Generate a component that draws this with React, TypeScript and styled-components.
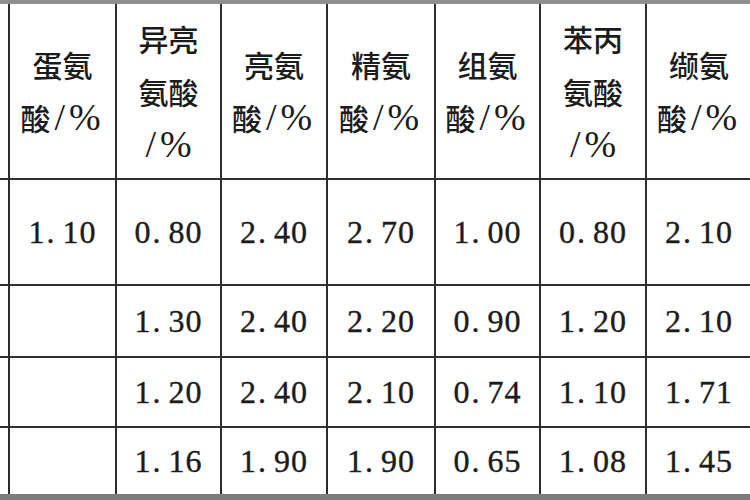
import React from "react";
import styled, { createGlobalStyle } from "styled-components";

const GlobalStyle = createGlobalStyle`
  html, body {
    margin: 0;
    padding: 0;
    background: #ffffff;
    overflow: hidden;
  }
`;

const Page = styled.div`
  width: 750px;
  height: 500px;
  overflow: hidden;
  background: #ffffff;
`;

const Table = styled.table`
  border-collapse: collapse;
  table-layout: fixed;
  width: 752px;
  border-top: 4px solid #8e8e8e;
  border-bottom: 6px solid #7c7c7c;
  color: #1c1c1c;
`;

const Col = styled.col<{ $w: number }>`
  width: ${(p) => p.$w}px;
`;

const Row = styled.tr<{ $h: number }>`
  height: ${(p) => p.$h}px;
`;

const Cell = styled.td`
  border: 2px solid #2c2c2c;
  padding: 0;
  text-align: center;
  vertical-align: middle;
  white-space: nowrap;
  &:first-child {
    border-left: none;
  }
`;

const HeadCell = styled(Cell)`
  font-family: "Noto Sans CJK SC", "Noto Sans CJK JP", sans-serif;
  font-size: 30px;
  line-height: 53px;
  font-weight: 500;
`;

const HeadLine = styled.span`
  display: block;
  height: 53px;
`;

const Sym = styled.span`
  font-family: "Liberation Serif", serif;
  font-size: 38px;
  font-weight: 400;
  letter-spacing: 4px;
  padding-left: 4px;
`;

const NumCell = styled(Cell)`
  font-family: "Liberation Serif", serif;
  font-size: 32px;
  letter-spacing: 1px;
  -webkit-text-stroke: 0.4px #1c1c1c;
`;

const Dot = styled.span`
  padding: 0 7px 0 1px;
`;

const widths = [9, 107, 105, 106, 108, 105, 106, 106];

const headers: string[][] = [
  ["蛋氨", "酸"],
  ["异亮", "氨酸", ""],
  ["亮氨", "酸"],
  ["精氨", "酸"],
  ["组氨", "酸"],
  ["苯丙", "氨酸", ""],
  ["缬氨", "酸"],
];

const rows: { h: number; values: string[] }[] = [
  { h: 106, values: ["1.10", "0.80", "2.40", "2.70", "1.00", "0.80", "2.10"] },
  { h: 72, values: ["", "1.30", "2.40", "2.20", "0.90", "1.20", "2.10"] },
  { h: 70, values: ["", "1.20", "2.40", "2.10", "0.74", "1.10", "1.71"] },
  { h: 70, values: ["", "1.16", "1.90", "1.90", "0.65", "1.08", "1.45"] },
];

const Value = ({ text }: { text: string }) => {
  if (!text) return null;
  const [whole, frac] = text.split(".");
  return (
    <>
      {whole}
      <Dot>.</Dot>
      {frac}
    </>
  );
};

const App = (): React.ReactElement => {
  return (
    <Page>
      <GlobalStyle />
      <Table>
        <colgroup>
          {widths.map((w, i) => (
            <Col key={i} $w={w} />
          ))}
        </colgroup>
        <tbody>
          <Row $h={177}>
            <Cell />
            {headers.map((lines, i) => (
              <HeadCell key={i}>
                {lines.map((line, j) =>
                  j === lines.length - 1 ? (
                    <HeadLine key={j}>
                      {line}
                      <Sym>/%</Sym>
                    </HeadLine>
                  ) : (
                    <HeadLine key={j}>{line}</HeadLine>
                  )
                )}
              </HeadCell>
            ))}
          </Row>
          {rows.map((r, i) => (
            <Row key={i} $h={r.h}>
              <Cell />
              {r.values.map((v, j) => (
                <NumCell key={j}>
                  <Value text={v} />
                </NumCell>
              ))}
            </Row>
          ))}
        </tbody>
      </Table>
    </Page>
  );
};

export default App;
